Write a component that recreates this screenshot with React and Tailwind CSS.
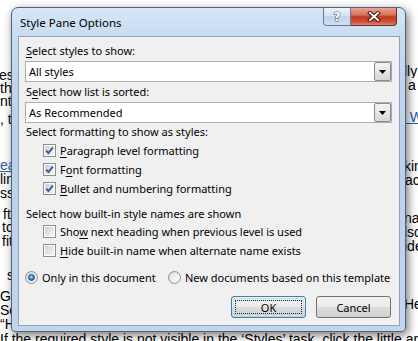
import React from "react";

const U = ({ children }) => (
  <span className="underline underline-offset-[2px] decoration-[1px]">{children}</span>
);

function Check({ checked }) {
  return (
    <span className="w-[13px] h-[13px] border border-[#8e8f8f] bg-white flex items-center justify-center shrink-0">
      <span className="relative w-[9px] h-[9px] bg-linear-to-br from-[#cdd1d6] to-[#f7f7f7] flex items-center justify-center">
        {checked && (
          <svg width="11" height="11" viewBox="0 0 11 11" className="absolute -left-[1px] -top-[1px]">
            <path d="M2.2 5.6 L4.4 8 L8.8 2.6" fill="none" stroke="#3a5a9f" strokeWidth="1.9" strokeLinejoin="miter" />
          </svg>
        )}
      </span>
    </span>
  );
}

function Radio({ checked }) {
  return (
    <span className="w-[13px] h-[13px] rounded-full border border-[#8e8f8f] bg-linear-to-br from-[#d2d5da] to-[#fbfbfb] flex items-center justify-center shrink-0">
      {checked ? (
        <span className="w-[7px] h-[7px] rounded-full bg-[radial-gradient(circle_at_45%_40%,#b4e6ff_0%,#4aa0e0_40%,#0f3f86_100%)] border border-[#1c4a86]" />
      ) : (
        <span className="w-[9px] h-[9px] rounded-full bg-linear-to-br from-[#e2e3e6] to-[#ffffff]" />
      )}
    </span>
  );
}

function Combo({ text }) {
  return (
    <div className="h-[21px] border border-[#abadb3] bg-white flex items-center">
      <span className="flex-1 pl-[3px] leading-[15px]">{text}</span>
      <div className="w-[17px] h-[19px] border border-[#8a8a8a] rounded-[2px] bg-linear-to-b from-[#f4f4f4] to-[#d7d7d7] flex items-center justify-center">
        <svg width="7" height="4" viewBox="0 0 7 4">
          <path d="M0 0 H7 L3.5 4 Z" fill="#000" />
        </svg>
      </div>
    </div>
  );
}

function CheckRow({ checked, children, className = "" }) {
  return (
    <div className={"h-[19px] flex items-center pl-[18px] gap-[4px] " + className}>
      <Check checked={checked} />
      <span className="leading-[15px]">{children}</span>
    </div>
  );
}

function Dialog() {
  return (
    <div className="absolute left-[11px] top-[7px] w-[395px] h-[325px] rounded-t-[7px] rounded-b-[4px] border border-[#4f6279] bg-[linear-gradient(180deg,#d7e6f6_0%,#c6daf0_10%,#bad0ea_40%,#c2d6ed_100%)] shadow-[2px_3px_10px_rgba(0,0,0,0.55)] flex flex-col pl-[6px] pr-[5px] pb-[5px] font-['Noto_Sans',sans-serif] text-[11px] text-black">
      {/* title bar */}
      <div className="h-[28px] flex items-start justify-between shrink-0">
        <span className="self-center pl-[2px] leading-[15px] text-[11.5px]">Style Pane Options</span>
        <div className="flex mr-[3px]">
          <div className="w-[28px] h-[18px] border border-[#667a93] border-t-0 rounded-bl-[4px] bg-[linear-gradient(180deg,#eef4fb_0%,#d5e2f1_45%,#c2d3e8_50%,#d2e0ef_100%)] flex items-center justify-center">
            <span className="font-['DejaVu_Sans',sans-serif] font-bold text-[12px] leading-[12px] text-white [-webkit-text-stroke:1px_#3d4d63] [paint-order:stroke_fill]">?</span>
          </div>
          <div className="w-[46px] h-[18px] border border-[#6e2a20] border-t-0 border-l-0 rounded-br-[4px] bg-[linear-gradient(180deg,#eaa391_0%,#d9735d_40%,#c23a22_52%,#cc4f37_80%,#de8370_100%)] flex items-center justify-center">
            <svg width="14" height="11" viewBox="0 0 14 11">
              <path d="M3 2 L11 9 M11 2 L3 9" stroke="#3d130d" strokeWidth="4" strokeLinecap="square" fill="none" />
              <path d="M3 2 L11 9 M11 2 L3 9" stroke="#ffffff" strokeWidth="2" strokeLinecap="square" fill="none" />
            </svg>
          </div>
        </div>
      </div>
      {/* client */}
      <div className="flex-1 border border-[#8ea3bb] bg-[#f0f0f0] flex flex-col px-[6px] pt-[6px]">
        <div className="h-[15px] leading-[15px] pl-[1px]">
          <U>S</U>elect styles to show:
        </div>
        <div className="mt-[3px] mr-[1px]">
          <Combo text="All styles" />
        </div>
        <div className="mt-[2px] h-[15px] leading-[15px] pl-[1px]">
          S<U>e</U>lect how list is sorted:
        </div>
        <div className="mt-[3px] mr-[1px]">
          <Combo text="As Recommended" />
        </div>
        <div className="mt-[1px] h-[15px] leading-[15px] pl-[1px]">Select formatting to show as styles:</div>
        <CheckRow checked className="mt-[2px]">
          <U>P</U>aragraph level formatting
        </CheckRow>
        <CheckRow checked>
          F<U>o</U>nt formatting
        </CheckRow>
        <CheckRow checked>
          <U>B</U>ullet and numbering formatting
        </CheckRow>
        <div className="mt-[8px] h-[15px] leading-[15px] pl-[1px]">Select how built-in style names are shown</div>
        <CheckRow className="mt-[1px]">
          Sho<U>w</U> next heading when previous level is used
        </CheckRow>
        <CheckRow>
          <U>H</U>ide built-in name when alternate name exists
        </CheckRow>
        <div className="mt-[8px] h-[19px] flex items-center">
          <div className="w-[143px] flex items-center gap-[4px]">
            <Radio checked />
            <span className="leading-[15px] whitespace-nowrap">Only in this document</span>
          </div>
          <div className="flex items-center gap-[4px]">
            <Radio />
            <span className="leading-[15px] whitespace-nowrap">New documents based on this template</span>
          </div>
        </div>
        <div className="mt-[9px] flex justify-end gap-[10px] mr-[2px]">
          <div className="w-[75px] h-[22px] rounded-[3px] border border-[#3c7fb1] bg-[linear-gradient(180deg,#f2f2f2_0%,#ebebeb_49%,#dddddd_50%,#cfcfcf_100%)] p-[1px]">
            <div className="w-full h-full rounded-[2px] border border-[#bde3f5] p-[1px]">
              <div className="w-full h-full border border-dotted border-[#222] flex items-center justify-center leading-[15px]">OK</div>
            </div>
          </div>
          <div className="w-[75px] h-[22px] rounded-[3px] border border-[#707070] bg-[linear-gradient(180deg,#f2f2f2_0%,#ebebeb_49%,#dddddd_50%,#cfcfcf_100%)] flex items-center justify-center leading-[15px]">
            Cancel
          </div>
        </div>
      </div>
    </div>
  );
}

const L = ({ mt = 0, ml = 0, children }) => (
  <div className="h-[13px] leading-[13px] whitespace-nowrap overflow-hidden" style={{ marginTop: mt, marginLeft: ml }}>
    {children}
  </div>
);

const Link = ({ children }) => <span className="text-[#2b5ead] underline">{children}</span>;

export default function App() {
  return (
    <div className="relative w-[418px] h-[341px] overflow-hidden bg-white font-['Liberation_Sans',Arial,sans-serif] text-[14px] text-black">
      <div className="flex h-[331px]">
        <div className="w-[14px] flex flex-col">
          <L mt={69} ml={-1}>es</L>
          <L>tha</L>
          <L>nt</L>
          <L mt={5}>, to</L>
          <L mt={33}><Link>ead</Link></L>
          <L mt={1}>line</L>
          <L mt={1}>ss</L>
          <L mt={9} ml={3}>ft</L>
          <L ml={2}>to</L>
          <L mt={1} ml={2}>fit</L>
          <L mt={21} ml={7}>sl</L>
          <L mt={8}>Go</L>
          <L mt={1}>Se</L>
          <L mt={1}>“H</L>
        </div>
        <div className="flex-1" />
        <div className="w-[14px] flex flex-col">
          <L mt={65}>lly</L>
          <L mt={1} ml={4}>a</L>
          <L mt={19} ml={-2}><Link>: W</Link></L>
          <L mt={36}>kin</L>
          <L mt={1} ml={1}>ac</L>
          <L mt={25}>na</L>
          <L mt={1}>lsc</L>
          <L mt={1}>ide</L>
          <L mt={45}>He</L>
        </div>
      </div>
      <div className="h-[13px] leading-[13px] whitespace-nowrap mt-[2px]">
        If the required style is not visible in the ‘Styles’ task, click the little arrow in
      </div>
      <Dialog />
    </div>
  );
}
